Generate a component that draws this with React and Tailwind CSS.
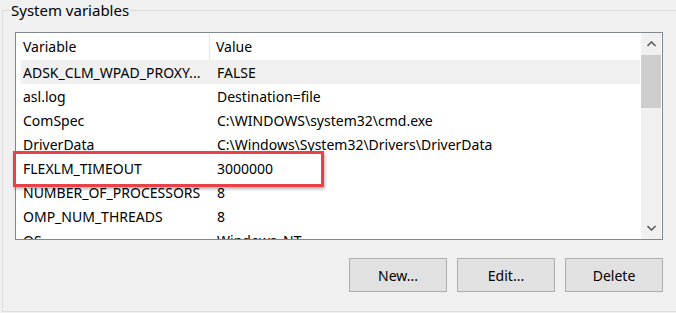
import React from "react";

const rows = [
  { name: "ADSK_CLM_WPAD_PROXY...", value: "FALSE", hover: true },
  { name: "asl.log", value: "Destination=file" },
  { name: "ComSpec", value: "C:\\WINDOWS\\system32\\cmd.exe" },
  { name: "DriverData", value: "C:\\Windows\\System32\\Drivers\\DriverData" },
  { name: "FLEXLM_TIMEOUT", value: "3000000" },
  { name: "NUMBER_OF_PROCESSORS", value: "8" },
  { name: "OMP_NUM_THREADS", value: "8" },
  { name: "OS", value: "Windows_NT" },
];

// chevron for the scrollbar arrows
const Chevron = ({ up }) => (
  <svg width="9" height="6" viewBox="0 0 9 6">
    <polyline
      points={up ? "0.5,5 4.5,1 8.5,5" : "0.5,1 4.5,5 8.5,1"}
      fill="none"
      stroke="#606060"
      strokeWidth="1.6"
    />
  </svg>
);

const Button = ({ children }) => (
  <button className="w-[98px] h-[34px] border border-[#adadad] bg-[#e1e1e1] text-[14px] text-black">
    {children}
  </button>
);

export default function App() {
  return (
    <div className="w-[676px] h-[313px] overflow-hidden bg-[#f0f0f0] pt-[10px] pl-[2px] font-['Segoe_UI','Noto_Sans',sans-serif] text-[14px] text-black">
      <div className="relative w-[700px] h-[302px] border border-[#dcdcdc] pl-[12px] pt-[21px]">
        {/* group label */}
        <div className="absolute left-[7px] -top-[11px] px-[1px] bg-[#f0f0f0] leading-[20px] text-[15px]">
          System variables
        </div>

        {/* list view */}
        <div className="w-[648px] h-[208px] border border-[#828790] bg-white flex overflow-hidden">
          <div className="w-[625px] pl-[5px]">
            <div className="h-[27px] flex items-center w-[619px]">
              <div className="w-[189px] h-[26px] flex items-center pl-[2px] border-r border-[#e5e5e5]">Variable</div>
              <div className="pl-[6px]">Value</div>
            </div>
            {rows.map((r) => (
              <div
                key={r.name}
                className={`h-[24px] w-[619px] flex items-center whitespace-nowrap ${r.hover ? "bg-[#f0f0f0]" : ""}`}
              >
                <div className="w-[190px] pl-[2px] overflow-hidden">{r.name}</div>
                <div className="pl-[6px]">{r.value}</div>
              </div>
            ))}
          </div>
          <div className="w-[20px] bg-[#f0f0f0] flex flex-col">
            <div className="h-[22px] flex items-center justify-center">
              <Chevron up />
            </div>
            <div className="h-[53px] bg-[#cdcdcd]" />
            <div className="flex-1" />
            <div className="h-[22px] flex items-center justify-center">
              <Chevron />
            </div>
          </div>
        </div>

        {/* buttons */}
        <div className="w-[648px] mt-[18px] flex justify-end gap-[10px]">
          <Button>New...</Button>
          <Button>Edit...</Button>
          <Button>Delete</Button>
        </div>

        {/* red highlight annotation */}
        <div className="absolute left-[10px] top-[140px] w-[311px] h-[36px] border-[3px] border-[#e84148] shadow-[1px_2px_3px_rgba(0,0,0,0.3)]" />
      </div>
    </div>
  );
}
